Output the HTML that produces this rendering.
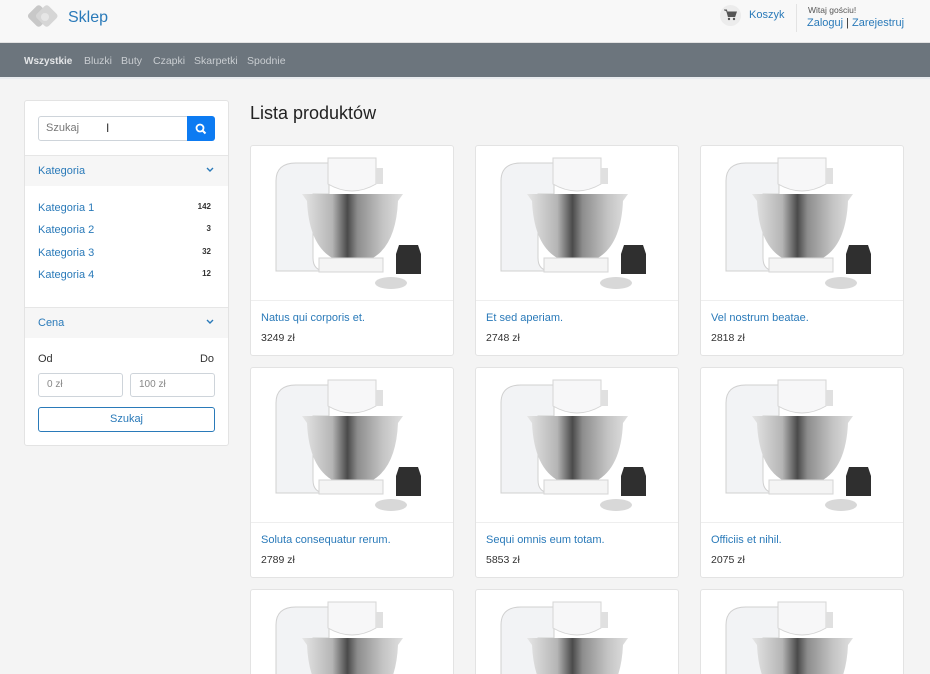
<!DOCTYPE html>
<html style="height:674px;overflow:hidden"><head><meta charset="utf-8">
<style>
*{box-sizing:border-box;margin:0;padding:0}
html,body{width:930px;height:674px;overflow:hidden}
body{background:#f4f4f4;font-family:"Liberation Sans",sans-serif;font-size:11px;color:#212529;position:relative}
a{color:#2a7ab9;text-decoration:none}
.hdr{position:absolute;left:0;top:0;width:930px;height:43px;background:#f8f8f8;border-bottom:1px solid #e2e2e2}
.nav{position:absolute;left:0;top:43px;width:930px;height:36px;background:#6c757d;border-bottom:2px solid #e9ecef}
.nav span{position:absolute;top:12px;color:#c9cdd1;font-size:10.5px}
.side{position:absolute;left:24px;top:100px;width:205px;height:346px;background:#fff;border:1px solid #e3e3e3;border-radius:3px}
.card{position:absolute;width:204px;height:211px;background:#fff;border:1px solid #e3e3e3;border-radius:3px;overflow:hidden}
.card.last{height:85px;border-bottom:none;border-radius:3px 3px 0 0}
.card .img{height:155px;border-bottom:1px solid #eee}
.card .t{position:absolute;left:10px;top:166px;color:#2a7ab9;font-size:11px}
.card .p{position:absolute;left:10px;top:186px;font-size:10.5px;color:#333}
.cat{position:absolute;left:13px;font-size:11px;color:#2a7ab9}
.cnt{position:absolute;right:17px;font-size:8px;font-weight:bold;color:#333}
</style></head><body>
<svg width="0" height="0" style="position:absolute"><defs><linearGradient id="b" x1="0" x2="1"><stop offset="0" stop-color="#e6e6e6"/><stop offset=".3" stop-color="#b5b5b5"/><stop offset=".45" stop-color="#4a4a4a"/><stop offset=".55" stop-color="#8d8d8d"/><stop offset=".8" stop-color="#c4c4c4"/><stop offset="1" stop-color="#e0e0e0"/></linearGradient></defs></svg>
<div class="hdr">
 <svg style="position:absolute;left:24px;top:3px" width="38" height="30" viewBox="0 0 38 30">
  <rect x="6" y="4" width="17" height="17" rx="3" transform="rotate(45 14 13)" fill="#c8c8c8"/>
  <rect x="14" y="4" width="17" height="17" rx="3" transform="rotate(45 22 13)" fill="#d6d6d6"/>
  <circle cx="21" cy="14" r="4" fill="#e6e6e6"/>
 </svg>
 <span style="position:absolute;left:68px;top:9px;font-size:16px;color:#2a7ab9">Sklep</span>
 <div style="position:absolute;left:720px;top:5px;width:21px;height:21px;border-radius:50%;background:#ececec"></div>
 <svg style="position:absolute;left:724px;top:9px" width="13" height="12" viewBox="0 0 13 12"><path d="M0 1h2.5l1.8 6.5h6.5l1.5-4.5H3.4" fill="#555" stroke="#555" stroke-width="1"/><circle cx="5" cy="10" r="1.2" fill="#555"/><circle cx="10" cy="10" r="1.2" fill="#555"/></svg>
 <span style="position:absolute;left:749px;top:9px;font-size:11px;color:#2a7ab9">Koszyk</span>
 <div style="position:absolute;left:796px;top:4px;width:1px;height:28px;background:#e3e3e3"></div>
 <span style="position:absolute;left:808px;top:5px;font-size:8.5px;color:#555">Witaj gościu!</span>
 <span style="position:absolute;left:807px;top:17px;font-size:11px;color:#2a7ab9">Zaloguj <span style="color:#333">|</span> Zarejestruj</span>
</div>
<div class="nav">
 <span style="left:24px;font-weight:bold;color:#e4e6e8;font-size:10px;top:12.5px">Wszystkie</span>
 <span style="left:84px">Bluzki</span>
 <span style="left:121px">Buty</span>
 <span style="left:153px">Czapki</span>
 <span style="left:194px">Skarpetki</span>
 <span style="left:247px">Spodnie</span>
</div>
<div class="side">
 <div style="position:absolute;left:13px;top:15px;width:150px;height:25px;border:1px solid #ced4da;border-radius:3px 0 0 3px"></div>
 <span style="position:absolute;left:21px;top:21px;color:#777;font-size:11px">Szukaj</span>
 <span style="position:absolute;left:81px;top:20px;color:#333;font-size:12px">I</span>
 <div style="position:absolute;left:162px;top:15px;width:28px;height:25px;background:#0d7bf2;border-radius:0 3px 3px 0"></div>
 <svg style="position:absolute;left:170px;top:22px" width="12" height="12" viewBox="0 0 12 12"><circle cx="5" cy="5" r="3.5" fill="none" stroke="#fff" stroke-width="1.8"/><path d="M7.5 7.5L10.5 10.5" stroke="#fff" stroke-width="2"/></svg>
 <div style="position:absolute;left:0;top:54px;width:203px;height:31px;background:#f6f6f6;border-top:1px solid #e6e6e6"></div>
 <span style="position:absolute;left:13px;top:64px;color:#2a7ab9;font-size:11px">Kategoria</span>
 <svg style="position:absolute;left:181px;top:66px" width="8" height="6" viewBox="0 0 8 6"><path d="M1 1l3 3 3-3" fill="none" stroke="#2a7ab9" stroke-width="1.4"/></svg>
 <span class="cat" style="top:101px">Kategoria 1</span><span class="cnt" style="top:101px">142</span>
 <span class="cat" style="top:123px">Kategoria 2</span><span class="cnt" style="top:123px">3</span>
 <span class="cat" style="top:146px">Kategoria 3</span><span class="cnt" style="top:146px">32</span>
 <span class="cat" style="top:168px">Kategoria 4</span><span class="cnt" style="top:168px">12</span>
 <div style="position:absolute;left:0;top:206px;width:203px;height:31px;background:#f6f6f6;border-top:1px solid #e6e6e6"></div>
 <span style="position:absolute;left:13px;top:216px;color:#2a7ab9;font-size:11px">Cena</span>
 <svg style="position:absolute;left:181px;top:218px" width="8" height="6" viewBox="0 0 8 6"><path d="M1 1l3 3 3-3" fill="none" stroke="#2a7ab9" stroke-width="1.4"/></svg>
 <span style="position:absolute;left:13px;top:252px;font-size:11px;color:#333">Od</span>
 <span style="position:absolute;right:14px;top:252px;font-size:11px;color:#333">Do</span>
 <div style="position:absolute;left:13px;top:272px;width:85px;height:24px;border:1px solid #ced4da;border-radius:3px"></div>
 <span style="position:absolute;left:22px;top:278px;font-size:10px;color:#888">0 zł</span>
 <div style="position:absolute;left:105px;top:272px;width:85px;height:24px;border:1px solid #ced4da;border-radius:3px"></div>
 <span style="position:absolute;left:114px;top:278px;font-size:10px;color:#888">100 zł</span>
 <div style="position:absolute;left:13px;top:306px;width:177px;height:25px;border:1px solid #2a7ab9;border-radius:3px;text-align:center;line-height:23px;color:#2a7ab9;font-size:11px">Szukaj</div>
</div>
<div style="position:absolute;left:250px;top:103px;font-size:18px;color:#222">Lista produktów</div>

<div class="card" style="left:250px;top:145px"><div class="img"><svg width="203" height="155" viewBox="0 0 203 155"><path d="M25 125V35Q25 17 45 17H78V48H62V112Q62 125 75 125Z" fill="#f2f3f5" stroke="#d0d0d0"/><path d="M77 12H125V38Q101 52 77 38Z" fill="#f7f7f8" stroke="#d5d5d5"/><rect x="125" y="22" width="7" height="16" fill="#e0e0e0"/><path d="M51 48H152L147 55Q145 100 120 113H83Q58 100 56 55Z" fill="url(#b)"/><path d="M68 112H132V126H68Z" fill="#f4f4f4" stroke="#d5d5d5"/><path d="M145 108l3-9h19l3 9v20h-25z" fill="#2f2f2f"/><ellipse cx="140" cy="137" rx="16" ry="6" fill="#d8d8d8"/></svg></div><a class="t">Natus qui corporis et.</a><span class="p">3249 zł</span></div>
<div class="card" style="left:475px;top:145px"><div class="img"><svg width="203" height="155" viewBox="0 0 203 155"><path d="M25 125V35Q25 17 45 17H78V48H62V112Q62 125 75 125Z" fill="#f2f3f5" stroke="#d0d0d0"/><path d="M77 12H125V38Q101 52 77 38Z" fill="#f7f7f8" stroke="#d5d5d5"/><rect x="125" y="22" width="7" height="16" fill="#e0e0e0"/><path d="M51 48H152L147 55Q145 100 120 113H83Q58 100 56 55Z" fill="url(#b)"/><path d="M68 112H132V126H68Z" fill="#f4f4f4" stroke="#d5d5d5"/><path d="M145 108l3-9h19l3 9v20h-25z" fill="#2f2f2f"/><ellipse cx="140" cy="137" rx="16" ry="6" fill="#d8d8d8"/></svg></div><a class="t">Et sed aperiam.</a><span class="p">2748 zł</span></div>
<div class="card" style="left:700px;top:145px"><div class="img"><svg width="203" height="155" viewBox="0 0 203 155"><path d="M25 125V35Q25 17 45 17H78V48H62V112Q62 125 75 125Z" fill="#f2f3f5" stroke="#d0d0d0"/><path d="M77 12H125V38Q101 52 77 38Z" fill="#f7f7f8" stroke="#d5d5d5"/><rect x="125" y="22" width="7" height="16" fill="#e0e0e0"/><path d="M51 48H152L147 55Q145 100 120 113H83Q58 100 56 55Z" fill="url(#b)"/><path d="M68 112H132V126H68Z" fill="#f4f4f4" stroke="#d5d5d5"/><path d="M145 108l3-9h19l3 9v20h-25z" fill="#2f2f2f"/><ellipse cx="140" cy="137" rx="16" ry="6" fill="#d8d8d8"/></svg></div><a class="t">Vel nostrum beatae.</a><span class="p">2818 zł</span></div>

<div class="card" style="left:250px;top:367px"><div class="img"><svg width="203" height="155" viewBox="0 0 203 155"><path d="M25 125V35Q25 17 45 17H78V48H62V112Q62 125 75 125Z" fill="#f2f3f5" stroke="#d0d0d0"/><path d="M77 12H125V38Q101 52 77 38Z" fill="#f7f7f8" stroke="#d5d5d5"/><rect x="125" y="22" width="7" height="16" fill="#e0e0e0"/><path d="M51 48H152L147 55Q145 100 120 113H83Q58 100 56 55Z" fill="url(#b)"/><path d="M68 112H132V126H68Z" fill="#f4f4f4" stroke="#d5d5d5"/><path d="M145 108l3-9h19l3 9v20h-25z" fill="#2f2f2f"/><ellipse cx="140" cy="137" rx="16" ry="6" fill="#d8d8d8"/></svg></div><a class="t">Soluta consequatur rerum.</a><span class="p">2789 zł</span></div>
<div class="card" style="left:475px;top:367px"><div class="img"><svg width="203" height="155" viewBox="0 0 203 155"><path d="M25 125V35Q25 17 45 17H78V48H62V112Q62 125 75 125Z" fill="#f2f3f5" stroke="#d0d0d0"/><path d="M77 12H125V38Q101 52 77 38Z" fill="#f7f7f8" stroke="#d5d5d5"/><rect x="125" y="22" width="7" height="16" fill="#e0e0e0"/><path d="M51 48H152L147 55Q145 100 120 113H83Q58 100 56 55Z" fill="url(#b)"/><path d="M68 112H132V126H68Z" fill="#f4f4f4" stroke="#d5d5d5"/><path d="M145 108l3-9h19l3 9v20h-25z" fill="#2f2f2f"/><ellipse cx="140" cy="137" rx="16" ry="6" fill="#d8d8d8"/></svg></div><a class="t">Sequi omnis eum totam.</a><span class="p">5853 zł</span></div>
<div class="card" style="left:700px;top:367px"><div class="img"><svg width="203" height="155" viewBox="0 0 203 155"><path d="M25 125V35Q25 17 45 17H78V48H62V112Q62 125 75 125Z" fill="#f2f3f5" stroke="#d0d0d0"/><path d="M77 12H125V38Q101 52 77 38Z" fill="#f7f7f8" stroke="#d5d5d5"/><rect x="125" y="22" width="7" height="16" fill="#e0e0e0"/><path d="M51 48H152L147 55Q145 100 120 113H83Q58 100 56 55Z" fill="url(#b)"/><path d="M68 112H132V126H68Z" fill="#f4f4f4" stroke="#d5d5d5"/><path d="M145 108l3-9h19l3 9v20h-25z" fill="#2f2f2f"/><ellipse cx="140" cy="137" rx="16" ry="6" fill="#d8d8d8"/></svg></div><a class="t">Officiis et nihil.</a><span class="p">2075 zł</span></div>

<div class="card last" style="left:250px;top:589px"><svg width="203" height="85" viewBox="0 0 203 85"><path d="M25 125V35Q25 17 45 17H78V48H62V112Q62 125 75 125Z" fill="#f2f3f5" stroke="#d0d0d0"/><path d="M77 12H125V38Q101 52 77 38Z" fill="#f7f7f8" stroke="#d5d5d5"/><rect x="125" y="22" width="7" height="16" fill="#e0e0e0"/><path d="M51 48H152L147 55Q145 100 120 113H83Q58 100 56 55Z" fill="url(#b)"/></svg></div>
<div class="card last" style="left:475px;top:589px"><svg width="203" height="85" viewBox="0 0 203 85"><path d="M25 125V35Q25 17 45 17H78V48H62V112Q62 125 75 125Z" fill="#f2f3f5" stroke="#d0d0d0"/><path d="M77 12H125V38Q101 52 77 38Z" fill="#f7f7f8" stroke="#d5d5d5"/><rect x="125" y="22" width="7" height="16" fill="#e0e0e0"/><path d="M51 48H152L147 55Q145 100 120 113H83Q58 100 56 55Z" fill="url(#b)"/></svg></div>
<div class="card last" style="left:700px;top:589px"><svg width="203" height="85" viewBox="0 0 203 85"><path d="M25 125V35Q25 17 45 17H78V48H62V112Q62 125 75 125Z" fill="#f2f3f5" stroke="#d0d0d0"/><path d="M77 12H125V38Q101 52 77 38Z" fill="#f7f7f8" stroke="#d5d5d5"/><rect x="125" y="22" width="7" height="16" fill="#e0e0e0"/><path d="M51 48H152L147 55Q145 100 120 113H83Q58 100 56 55Z" fill="url(#b)"/></svg></div>
</body></html>
